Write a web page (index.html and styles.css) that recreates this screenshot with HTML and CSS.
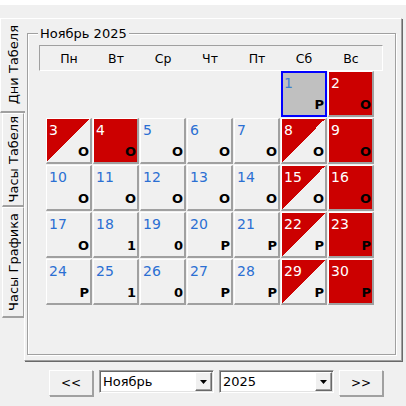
FILE: index.html
```html
<!DOCTYPE html>
<html lang="ru">
<head>
<meta charset="utf-8">
<title>Календарь</title>
<link rel="stylesheet" href="styles.css">
</head>
<body>
<div class="topbar"></div>
<div class="tabctl">
  <div class="tabs">
    <div class="tab active"><span>Дни Табеля</span></div>
    <div class="tab t2"><span>Часы Табеля</span></div>
    <div class="tab t3"><span>Часы Графика</span></div>
  </div>
  <div class="panel">
    <fieldset class="group">
      <legend>Ноябрь 2025</legend>
      <div class="groupbody">
        <div class="weekhead">
          <span>Пн</span><span>Вт</span><span>Ср</span><span>Чт</span><span>Пт</span><span>Сб</span><span>Вс</span>
        </div>
        <div class="grid">
          <div class="cell empty"></div>
          <div class="cell empty"></div>
          <div class="cell empty"></div>
          <div class="cell empty"></div>
          <div class="cell empty"></div>
          <div class="cell sel"><span class="num">1</span><span class="mark">Р</span></div>
          <div class="cell red"><span class="num">2</span><span class="mark">О</span></div>

          <div class="cell half"><span class="num">3</span><span class="mark">О</span></div>
          <div class="cell red"><span class="num">4</span><span class="mark">О</span></div>
          <div class="cell"><span class="num">5</span><span class="mark">О</span></div>
          <div class="cell"><span class="num">6</span><span class="mark">О</span></div>
          <div class="cell"><span class="num">7</span><span class="mark">О</span></div>
          <div class="cell half"><span class="num">8</span><span class="mark">О</span></div>
          <div class="cell red"><span class="num">9</span><span class="mark">О</span></div>

          <div class="cell"><span class="num">10</span><span class="mark">О</span></div>
          <div class="cell"><span class="num">11</span><span class="mark">О</span></div>
          <div class="cell"><span class="num">12</span><span class="mark">О</span></div>
          <div class="cell"><span class="num">13</span><span class="mark">О</span></div>
          <div class="cell"><span class="num">14</span><span class="mark">О</span></div>
          <div class="cell half"><span class="num">15</span><span class="mark">О</span></div>
          <div class="cell red"><span class="num">16</span><span class="mark">О</span></div>

          <div class="cell"><span class="num">17</span><span class="mark">О</span></div>
          <div class="cell"><span class="num">18</span><span class="mark">1</span></div>
          <div class="cell"><span class="num">19</span><span class="mark">0</span></div>
          <div class="cell"><span class="num">20</span><span class="mark">Р</span></div>
          <div class="cell"><span class="num">21</span><span class="mark">Р</span></div>
          <div class="cell half"><span class="num">22</span><span class="mark">Р</span></div>
          <div class="cell red"><span class="num">23</span><span class="mark">Р</span></div>

          <div class="cell"><span class="num">24</span><span class="mark">Р</span></div>
          <div class="cell"><span class="num">25</span><span class="mark">1</span></div>
          <div class="cell"><span class="num">26</span><span class="mark">0</span></div>
          <div class="cell"><span class="num">27</span><span class="mark">Р</span></div>
          <div class="cell"><span class="num">28</span><span class="mark">Р</span></div>
          <div class="cell half"><span class="num">29</span><span class="mark">Р</span></div>
          <div class="cell red"><span class="num">30</span><span class="mark">Р</span></div>
        </div>
      </div>
    </fieldset>
  </div>
</div>
<div class="controls">
  <div class="btn first">&lt;&lt;</div>
  <div class="combo"><span class="val">Ноябрь</span><span class="drop"><svg width="7" height="4" viewBox="0 0 7 4"><polygon points="0,0 7,0 3.5,4" fill="#000"/></svg></span></div>
  <div class="combo"><span class="val">2025</span><span class="drop"><svg width="7" height="4" viewBox="0 0 7 4"><polygon points="0,0 7,0 3.5,4" fill="#000"/></svg></span></div>
  <div class="btn">&gt;&gt;</div>
</div>
</body>
</html>
```
FILE: styles.css
```css
* { box-sizing: border-box; }
html, body { margin: 0; }
body {
  width: 406px;
  height: 406px;
  overflow: hidden;
  background: #f0f0f0;
  font-family: "DejaVu Sans", "Noto Sans", sans-serif;
  font-size: 13px;
  color: #000;
}
.topbar { height: 5px; background: #fff; }

.tabctl {
  display: flex;
  margin: 13px 4px 0 0;
  height: 343px;
}
.tabs {
  width: 25px;
  margin-right: -1px;
  display: flex;
  flex-direction: column;
  position: relative;
  z-index: 1;
}
.tab {
  display: flex;
  align-items: center;
  justify-content: center;
  background: #f0f0f0;
  border-style: solid;
  border-color: #fff #a0a0a0 #a0a0a0 #fff;
}
.tab span {
  writing-mode: vertical-rl;
  transform: rotate(180deg);
  line-height: 15px;
  white-space: nowrap;
}
.tab.active {
  width: 25px;
  height: 95px;
  border-width: 1px 0 2px 1px;
  padding-left: 1px;
}
.tab.t2, .tab.t3 {
  width: 22px;
  margin-left: 2px;
  border-width: 1px 1px 2px 1px;
}
.tab.t2 { height: 94px; }
.tab.t3 { height: 111px; }

.panel {
  flex: 1;
  display: flex;
  border: 1px solid;
  border-color: #fff #a0a0a0 #a0a0a0 #fff;
  box-shadow: 1px 1px 0 #696969;
  padding: 7px 5px 5px 2px;
}
.group {
  flex: 1;
  min-width: 0;
  margin: 0;
  padding: 0;
  border: 1px solid #a0a0a0;
  box-shadow: inset 1px 1px 0 #fff, 1px 1px 0 #fff;
}
.group legend {
  margin-left: 10px;
  padding: 0 2px;
  line-height: 15px;
  background: #f0f0f0;
}
.groupbody { padding: 4px 0 0 11px; }

.weekhead {
  width: 344px;
  height: 26px;
  border: 1px solid;
  border-color: #a0a0a0 #fff #fff #a0a0a0;
  padding: 0 8px 0 6px;
  display: grid;
  grid-template-columns: repeat(7, 46px);
  column-gap: 1px;
  align-items: center;
  text-align: center;
  font-size: 12.5px;
}

.grid {
  margin-left: 7px;
  display: grid;
  grid-template-columns: repeat(7, 46px);
  grid-auto-rows: 46px;
  gap: 1px;
}
.cell {
  display: flex;
  flex-direction: column;
  justify-content: space-between;
  border-style: solid;
  border-width: 1px 2px 2px 1px;
  border-color: #fff #a0a0a0 #a0a0a0 #fff;
  background: #f0f0f0;
  padding: 4px 1px 3px 2px;
  line-height: 15px;
}
.cell.empty { border: none; background: none; }
.num { color: #2b6fd3; font-size: 14px; }
.mark { align-self: flex-end; font-weight: bold; }
.cell.red { background: #cc0000; }
.cell.half { background: linear-gradient(to bottom right, #cc0000 50%, #f0f0f0 50%); }
.cell.red .num, .cell.half .num { color: #fff; }
.cell.sel {
  background: #c0c0c0;
  border: 2px solid #0000ff;
  padding: 3px 1px 3px 1px;
}
.cell.sel .num { color: #3f7fcf; }

.controls {
  display: flex;
  gap: 5px;
  margin: 9px 0 0 49px;
}
.btn {
  width: 44px;
  height: 26px;
  display: flex;
  align-items: center;
  justify-content: center;
  border: 1px solid;
  border-color: #fff #a0a0a0 #a0a0a0 #fff;
  box-shadow: 1px 1px 0 #a0a0a0;
  font-size: 12px;
}
.btn.first { margin-right: 1px; }
.combo {
  width: 115px;
  height: 23px;
  display: flex;
  align-items: center;
  justify-content: space-between;
  background: #fff;
  border: 1px solid;
  border-color: #a0a0a0 #fff #fff #a0a0a0;
  box-shadow: inset 1px 1px 0 #696969, inset -1px -1px 0 #e3e3e3;
  padding: 1px 1px 1px 3px;
}
.combo .val { line-height: 15px; }
.drop {
  width: 17px;
  height: 19px;
  display: flex;
  align-items: center;
  justify-content: center;
  background: #f0f0f0;
  border: 1px solid;
  border-color: #fff #696969 #696969 #fff;
  box-shadow: inset -1px -1px 0 #a0a0a0;
}
```
